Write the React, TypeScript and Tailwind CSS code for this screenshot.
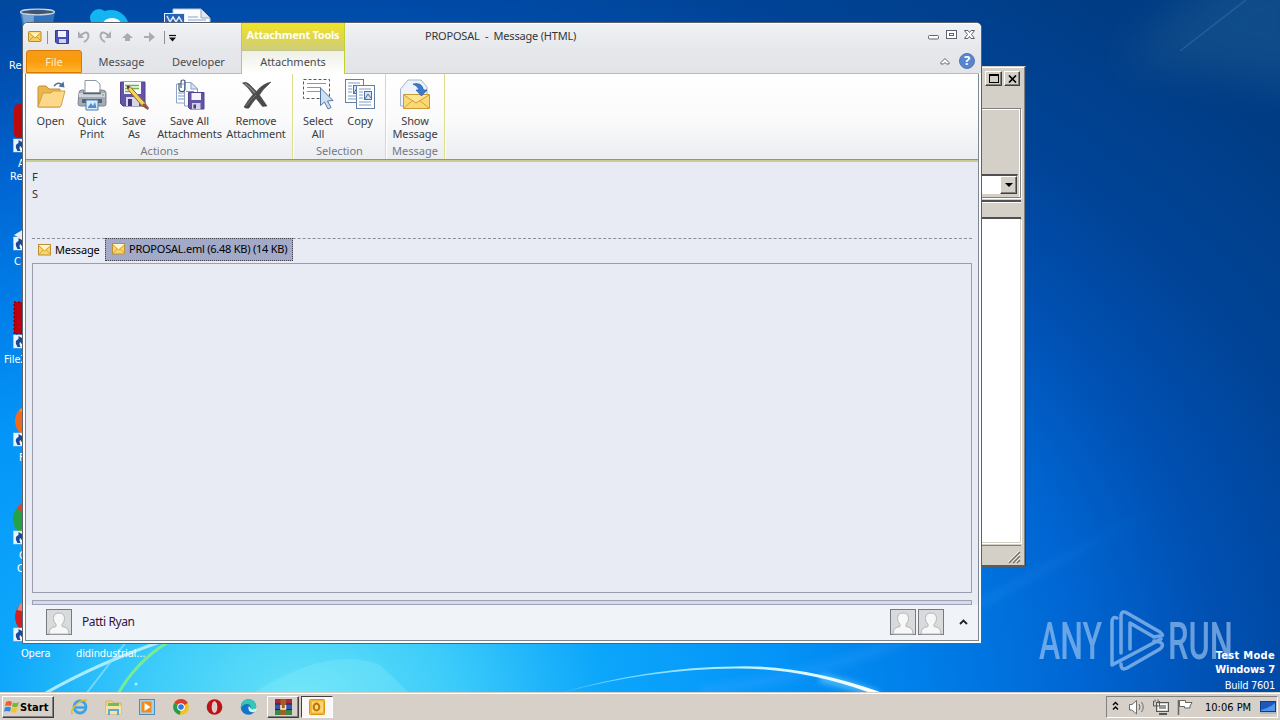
import type { ReactNode } from 'react'

interface RibbonButtonProps {
  icon: ReactNode
  lines: string[]
  className: string
}

const TABS = [
  { label: 'Message', className: 'w-[79px]' },
  { label: 'Developer', className: 'w-[75px]' },
]

function Wallpaper() {
  return (
    <svg className="absolute inset-0" width="1280" height="720" viewBox="0 0 1280 720">
      <defs>
        <radialGradient id="sky" gradientUnits="userSpaceOnUse" cx="0" cy="0" r="900" gradientTransform="translate(300 700) scale(1.4 1)">
          <stop offset="0" stopColor="#66e2f7" />
          <stop offset="0.12" stopColor="#3dccfa" />
          <stop offset="0.24" stopColor="#0ca6fb" />
          <stop offset="0.38" stopColor="#0494f8" />
          <stop offset="0.5" stopColor="#007de8" />
          <stop offset="0.62" stopColor="#0066d3" />
          <stop offset="0.73" stopColor="#0050b2" />
          <stop offset="0.84" stopColor="#004498" />
          <stop offset="1" stopColor="#003c84" />
        </radialGradient>
        <linearGradient id="arc" x1="0" x2="1" y1="0" y2="0">
          <stop offset="0" stopColor="#7fdcff" stopOpacity="0.7" />
          <stop offset="0.55" stopColor="#b9f0ff" />
          <stop offset="1" stopColor="#fff" />
        </linearGradient>
        <linearGradient id="beam" x1="0" x2="1" y1="0" y2="0">
          <stop offset="0" stopColor="#3aa4ff" stopOpacity="0.3" />
          <stop offset="1" stopColor="#3aa4ff" stopOpacity="0" />
        </linearGradient>
        <filter id="soft" x="-20%" y="-50%" width="140%" height="200%">
          <feGaussianBlur stdDeviation="3" />
        </filter>
        <filter id="haze" x="-50%" y="-50%" width="200%" height="200%">
          <feGaussianBlur stdDeviation="20" />
        </filter>
      </defs>
      <rect width="1280" height="720" fill="url(#sky)" />
      <path d="M1120 60 L1240 -40 L1320 -40 L1320 90Z" fill="#4d8aa0" opacity="0.2" filter="url(#haze)" />
      <path d="M1180 51 L1246 0" stroke="#6d98c8" strokeWidth="1.5" opacity="0.25" />
      <path d="M700 692 Q860 670 980 604 T1160 510" stroke="url(#beam)" strokeWidth="12" fill="none" filter="url(#soft)" />
      <path d="M255 692 Q330 645 380 665 L408 692Z" fill="#a0f4ff" opacity="0.22" />
      <path d="M820 678 Q850 684 878 696" stroke="#7fdcff" strokeWidth="8" fill="none" opacity="0.6" filter="url(#soft)" />
      <path d="M560 693 Q650 667 735 666.500 Q800 664 880 692 L868 692 Q800 668 735 668.500 Q650 669 560 693Z" fill="url(#arc)" />
      <path d="M44 694 Q96 664 160 642" stroke="#b8efff" strokeWidth="3" fill="none" opacity="0.9" />
      <path d="M86 694 L126 642" stroke="#8fe4ff" strokeWidth="2" opacity="0.7" />
      <path d="M118 694 Q136 662 168 642" stroke="#7df08a" strokeWidth="3" fill="none" opacity="0.9" />
      <circle cx="136" cy="684" r="1.500" fill="#a5f0ff" />
    </svg>
  )
}

function ShortcutArrow({ y }: { y: number }) {
  return (
    <g transform={`translate(13.5 ${y})`}>
      <rect width="13" height="13" fill="#eef4fb" stroke="#c5d4e4" strokeWidth="0.5" />
      <path d="M4 12 Q0 6 5 4 L5 1 L12 5 L8 9 L7 7 Q5 8 7 12Z" fill="#16499c" />
    </g>
  )
}

function DesktopIcons() {
  return (
    <>
      <svg className="absolute left-0 top-0" width="230" height="650" viewBox="0 0 230 650">
        <path d="M20 12 L55 12 L50 40 L25 40Z" fill="#3f7cbf" opacity="0.8" />
        <path d="M22 14 L34 16 L33 30 L25 30Z" fill="#a5c4e6" opacity="0.6" />
        <ellipse cx="37.500" cy="12" rx="17" ry="2.800" fill="#3e5672" stroke="#c9d6e2" strokeWidth="1.300" />
        <circle cx="99" cy="18" r="9" fill="#12b5f2" />
        <circle cx="111" cy="28" r="18" fill="#12b5f2" />
        <ellipse cx="112" cy="24" rx="9" ry="6" fill="#fff" />
        <path d="M173 9 L201 9 L210 18 L210 40 L173 40Z" fill="#fbfcfe" stroke="#b6c4d8" />
        <path d="M201 9 L201 18 L210 18" fill="#dfe6f0" stroke="#93a6c2" />
        <rect x="164.500" y="13.500" width="20" height="16" fill="#2a60b5" stroke="#e5eefa" />
        <path d="M167 16 L170 22 L173 17 L176 22 L179 17 L182 22" stroke="#d8e6fa" strokeWidth="1.500" fill="none" />
        <path d="M188 17h10M188 20h18" stroke="#8aa3cc" />
        <rect x="14" y="104" width="30" height="34" rx="5" fill="#bb0b0b" />
        <path d="M14 235 L24 229 L24 240Z" fill="#e8edf4" />
        <rect x="14" y="302" width="20" height="32" fill="#bc0010" stroke="#600" strokeDasharray="2 2" />
        <circle cx="32" cy="421" r="17" fill="#f26b1d" />
        <path d="M19 410 Q28 405 32 420" fill="#ff8e2e" />
        <circle cx="30" cy="519" r="17" fill="#27a243" />
        <path d="M30 519 L17 508 A17 17 0 0 1 45 508Z" fill="#e83e32" />
        <circle cx="32" cy="617" r="17" fill="#d3201f" />
        <path d="M17 610 Q20 602 26 600 L26 612Z" fill="#f07c74" />
        {[139, 237, 335, 433, 531, 628].map((y) => (
          <ShortcutArrow key={y} y={y} />
        ))}
      </svg>
      <div className="absolute inset-0 font-['DejaVu_Sans_Condensed','DejaVu_Sans',sans-serif] text-[11px] leading-[13px] text-white">
        <span className="absolute left-[9px] top-[59px]">Re</span>
        <span className="absolute left-[18px] top-[157px]">A</span>
        <span className="absolute left-[10px] top-[170px]">Re</span>
        <span className="absolute left-[14px] top-[255px]">C</span>
        <span className="absolute left-[4px] top-[353px]">FileZ</span>
        <span className="absolute left-[19px] top-[451px]">F</span>
        <span className="absolute left-[19px] top-[549px]">G</span>
        <span className="absolute left-[17px] top-[562px]">C</span>
        <span className="absolute left-[21px] top-[647px] tracking-[-0.2px]">Opera</span>
        <span className="absolute left-[76px] top-[647px] tracking-[-0.1px]">didindustrial...</span>
      </div>
    </>
  )
}

function Watermark() {
  return (
    <svg className="absolute left-[1030px] top-[590px]" width="210" height="90" viewBox="0 -10 210 90" overflow="visible">
      <g fill="#a9cdf5" opacity="0.62" fontWeight="500" fontFamily="Roboto, sans-serif" fontSize="52">
        <text x="9" y="59" textLength="63" lengthAdjust="spacingAndGlyphs">ANY</text>
        <text x="138" y="59" textLength="65" lengthAdjust="spacingAndGlyphs">RUN</text>
      </g>
      <g fill="none" stroke="#a9cdf5" strokeWidth="3.500" strokeLinejoin="round" strokeLinecap="round" opacity="0.65">
        <path d="M87 18 Q82 16 82 22 V65 L131 39" />
        <path d="M91 53 V15 Q92 10 97 13 L130 32 Q135 36 130 36 L124 37 L100 23 V49" />
        <path d="M91 64 Q91 71 97 68 L130 49 Q135 45 130 42 L124 41" />
      </g>
    </svg>
  )
}

function BackWindow() {
  return (
    <div className="absolute left-[940px] top-[66px] flex h-[501px] w-[86px] flex-col border-b-2 border-r border-t border-b-[#5d5c58] border-r-[#404040] border-t-[#d4d0c8] bg-[#d4d0c8] pr-[4px] shadow-[inset_-1px_0_0_#808080,inset_0_1px_0_#fff]">
      <div className="flex h-[41px] justify-end gap-0.5 pt-1 pr-px">
        <div className="flex h-[15px] w-[17px] items-center justify-center border border-b-[#404040] border-l-white border-r-[#404040] border-t-white shadow-[inset_-1px_-1px_0_#808080]">
          <div className="h-[9px] w-[10px] border border-t-2 border-black" />
        </div>
        <div className="flex h-[15px] w-[16px] items-center justify-center border border-b-[#404040] border-l-white border-r-[#404040] border-t-white shadow-[inset_-1px_-1px_0_#808080]">
          <svg width="9" height="8" viewBox="0 0 9 8">
            <path d="M1 0.500 L8 7.500 M8 0.500 L1 7.500" stroke="#000" strokeWidth="1.700" />
          </svg>
        </div>
      </div>
      <div className="flex h-[90px] flex-col justify-end border-b border-r border-t border-[#808080] pb-0.5 pr-0.5 shadow-[1px_1px_0_#fff,inset_-1px_1px_0_#fff]">
        <div className="flex h-[21px] justify-end border border-t-2 border-[#d4d0c8] border-t-[#505050] bg-white">
          <div className="flex w-[17px] items-center justify-center border border-b-[#404040] border-l-white border-r-[#404040] border-t-white bg-[#d4d0c8] shadow-[inset_-1px_-1px_0_#808080]">
            <svg width="8" height="4" viewBox="0 0 8 4">
              <path d="M0 0H8L4 4Z" />
            </svg>
          </div>
        </div>
      </div>
      <div className="mt-[2px] h-[19px] border-b-2 border-t-2 border-[#505050] shadow-[inset_0_1px_0_#fff]" />
      <div className="h-[324px] border-b border-r border-[#d4d0c8] bg-white shadow-[1px_1px_0_#fff]" />
      <div className="mt-[2px] flex flex-1 items-end justify-end border-t border-[#808080]">
        <svg width="13" height="17" viewBox="0 0 13 17">
          <path d="M1 15 L12 4 M5 15 L12 8 M9 15 L12 12" stroke="#77746e" strokeWidth="1.500" />
          <path d="M0 14 L11 3 M4 14 L12 6 M8 14 L12 10" stroke="#fff" strokeWidth="0.700" />
        </svg>
      </div>
    </div>
  )
}

function Envelope() {
  return (
    <svg width="14" height="12" viewBox="0 0 14 12">
      <rect x="0.500" y="0.500" width="12" height="10.500" fill="#fbd667" stroke="#b98f3c" />
      <path d="M1 1 H12.500 L6.500 6.500Z" fill="#fff6cb" />
      <path d="M1 10.500 L5 6 M12.500 10.500 L8.500 6 M1 2 L6.500 7 L12.500 2" fill="none" stroke="#d9a23a" />
    </svg>
  )
}

function OpenIcon() {
  return (
    <svg width="32" height="32" viewBox="0 0 32 32">
      <path d="M3 28 V9 Q3 7 5 7 H11 L14 10 H25 V28Z" fill="#e9b54d" stroke="#c58f34" />
      <path d="M3 28 L8 14 H16 L18 12 H30 L26 27 Q25.500 28 24 28Z" fill="#fbd88a" stroke="#d3a049" />
      <path d="M19 7 Q23 2 27 6" fill="none" stroke="#4e7297" strokeWidth="1.600" />
      <path d="M23.500 7.500 L29.500 8.500 L28.500 2.500Z" fill="#4e7297" />
    </svg>
  )
}

function PrinterIcon() {
  return (
    <svg width="32" height="32" viewBox="0 0 32 32">
      <path d="M9 14 V1.500 H20 L24 5 V14Z" fill="#fff" stroke="#8d98a6" />
      <path d="M3 14 Q3 11 6 11 H8 V14 H24 V11 H26 Q30 11 30 14 V25 Q30 27 28 27 H5 Q2 27 2 25Z" fill="#a3abb6" stroke="#7c8592" />
      <path d="M3 14 H29 V18 H3Z" fill="#d0d5dc" />
      <path d="M7 14.500h18" stroke="#59626f" strokeWidth="1.500" />
      <circle cx="27" cy="16" r="1" fill="#83b95c" />
      <path d="M6 20 H26 V24 H6Z" fill="#596473" />
      <path d="M10 21 H22 V31 H10Z" fill="#dcecfb" stroke="#4e7db2" />
      <path d="M12 28 L15 24 L17 27 L19 23 L20.500 29 H12Z" fill="#4d8fd0" />
    </svg>
  )
}

function SaveAsIcon() {
  return (
    <svg width="32" height="32" viewBox="0 0 32 32">
      <path d="M2.500 3 H27 V27 H5 L2.500 24.500Z" fill="#6453a6" stroke="#51428f" />
      <rect x="6" y="3" width="17" height="12" fill="#f7f9fc" />
      <path d="M7 6.500h14M7 9.500h14M7 12.500h10" stroke="#72b053" strokeWidth="1.300" />
      <rect x="8" y="18" width="13" height="9" fill="#d6d6e6" />
      <rect x="10" y="20" width="4" height="7" fill="#45377d" />
      <path d="M9 7 L12 7.500 L28 25 L25 28 L10 10.500Z" fill="#f8d456" stroke="#926a28" />
      <path d="M9 7 L12 7.500 L10 10.500Z" fill="#35312c" />
      <path d="M25.500 24.500 L28 25 L31 29 L30 31 L26 28.500 L24 26Z" fill="#8f5748" />
    </svg>
  )
}

function SaveAllIcon() {
  return (
    <svg width="32" height="32" viewBox="0 0 32 32">
      <path d="M2.500 5 H11 L15 9 V24 H2.500Z" fill="#fff" stroke="#8da3c3" />
      <path d="M10.500 3.500 H17 L23.500 10 V27 H10.500Z" fill="#f6f9fd" stroke="#8da3c3" />
      <path d="M17 3.500 V10 H23.500Z" fill="#dbe6f4" stroke="#8da3c3" />
      <path d="M4 14h6M4 17h6M4 20h6M12 12.500h8" stroke="#7195c6" />
      <path d="M5 4 V10 Q5 12.500 8 12.500 Q11 12.500 11 10 V3 Q11 1 9 1 Q7 1 7 3 V9" fill="none" stroke="#445a79" strokeWidth="1.200" />
      <path d="M14.500 13.500 H30 V30 H16 L14.500 28.500Z" fill="#6553a7" stroke="#51428f" />
      <rect x="17.500" y="14" width="9.500" height="7" fill="#f3f5fb" />
      <rect x="18" y="24" width="8.500" height="6" fill="#d4d3e5" />
      <rect x="19.500" y="25.500" width="2.500" height="4" fill="#45377d" />
    </svg>
  )
}

function RemoveIcon() {
  return (
    <svg width="32" height="32" viewBox="0 0 32 32">
      <path d="M2.500 4 Q6 2 9 5 Q13 9 16.500 12.500 Q22 5 31 3 L28 6 Q23 10 19.500 16 Q23 21 27 27 L22.500 27.500 Q19 23 16 19.500 Q12 24 9 29 Q6 30 4 28 Q8 21 13 15.500 Q8 8 2.500 4Z" fill="#4b4b4d" stroke="#3a3a3c" strokeWidth="0.500" />
      <path d="M5 4.500 Q10 8 15 14" fill="none" stroke="#8d8d8f" strokeWidth="1.500" />
      <path d="M6 27 Q11 20 16 16" fill="none" stroke="#77777a" />
    </svg>
  )
}

function SelectAllIcon() {
  return (
    <svg width="32" height="32" viewBox="0 0 32 32">
      <rect x="1.500" y="0.500" width="26" height="19" fill="#fff" stroke="#55585e" strokeWidth="1" strokeDasharray="3 2" />
      <path d="M5 4.500h19M5 8.500h14M5 12.500h14" stroke="#8b97a8" />
      <path d="M18.500 9 V26.500 L22.500 23 L26 30 L29 28.500 L25.500 22 L31 21.500Z" fill="#cfe0f3" stroke="#53769f" />
    </svg>
  )
}

function PageGlyph({ x, y }: { x: number; y: number }) {
  return (
    <g transform={`translate(${x} ${y})`}>
      <rect x="0.500" y="0.500" width="18" height="23" fill="#fff" stroke="#627fa7" />
      <path d="M3 4h12M3 7h4M3 10h4M3 13h4M3 17h12M3 20h12" stroke="#7b9dc9" />
      <rect x="8.500" y="6.500" width="7" height="8" fill="#d2e3f6" stroke="#4f719f" />
      <path d="M9 14 L12 9 L15 13" fill="none" stroke="#466f9f" />
    </g>
  )
}

function CopyIcon() {
  return (
    <svg width="32" height="32" viewBox="0 0 32 32">
      <PageGlyph x={1} y={0} />
      <PageGlyph x={12} y={6} />
    </svg>
  )
}

function ShowMessageIcon() {
  return (
    <svg width="32" height="32" viewBox="0 0 32 32">
      <path d="M1.500 27 V10 L9 1 H22 L28 8 V18 H5 V27Z" fill="#edf3fa" stroke="#a6b5c8" />
      <path d="M4.500 15.500 H30.500 V29.500 H4.500Z" fill="#fbd873" stroke="#c99a33" />
      <path d="M5 16 L17 24 L30 16" fill="#fce492" stroke="#ce9f38" />
      <path d="M5 29 L13.500 21.500 M30 29 L20.500 21.500" stroke="#d4a33b" />
      <path d="M14 5 Q23 3 24.500 11 H28 L22.500 17 L17 11 H20 Q19 7 14 5Z" fill="#3e78cb" stroke="#275aa5" strokeWidth="0.700" />
    </svg>
  )
}

function RibbonButton({ icon, lines, className }: RibbonButtonProps) {
  return (
    <div className={`flex flex-col items-center ${className}`}>
      {icon}
      <div className="mt-[3px] text-center text-[11px] leading-[13px] tracking-[-0.1px] text-[#3a3d44]">
        {lines.map((line) => (
          <div key={line} className="whitespace-nowrap">{line}</div>
        ))}
      </div>
    </div>
  )
}

function RibbonGroup({ name, className, children }: { name: string; className: string; children: ReactNode }) {
  return (
    <div className={`flex flex-col border-r border-[#dcdf8c] pt-[5px] shadow-[1px_0_0_#fff] ${className}`}>
      <div className="flex h-[65px]">{children}</div>
      <div className="pr-[3px] text-center text-[11px] leading-[13px] text-[#737986]">{name}</div>
    </div>
  )
}

function QuickAccess() {
  return (
    <svg width="160" height="20" viewBox="26 27 160 20">
      <g transform="translate(28 31)">
        <rect x="0.500" y="0.500" width="12.500" height="10" rx="0.800" fill="#f8cf5a" stroke="#b58a35" />
        <path d="M1 1.500 L7 7 L13 1.500 M1 10 L5 6 M13 10 L9 6" fill="#fff2b8" stroke="#d4982c" />
      </g>
      <path d="M47.500 31 V44" stroke="#8b9098" />
      <path d="M55.500 30.500 H68.500 V43.500 H57 L55.500 42Z" fill="#4a52b8" stroke="#35398f" />
      <rect x="58" y="31" width="8" height="6" fill="#f1f4fd" />
      <rect x="59" y="39" width="7" height="4" fill="#cfd4ee" />
      <g fill="none" stroke="#a9acb1" strokeWidth="2">
        <path d="M80 36 Q88 29 88.500 36 Q88 40 84 42" />
        <path d="M109 36 Q101 29 100.500 36 Q101 40 105 42" />
      </g>
      <path d="M78 31 V38 H84Z M111 31 V38 H105Z" fill="#a9acb1" />
      <path d="M122 38 L127.500 33 L133 38 H130 V41 H125 V38Z M144 36 H149 V32 L155 37 L149 42 V38 H144Z" fill="#a9acb1" />
      <path d="M164.500 31 V44" stroke="#8b9098" />
      <path d="M169 35.500 H176" stroke="#111" strokeWidth="1.200" />
      <path d="M169 37.500 H176 L172.500 41.500Z" fill="#111" />
    </svg>
  )
}

function WindowHeader() {
  return (
    <div className="flex h-[50px] shrink-0 rounded-t-[5px] bg-linear-to-b from-[#f1f2f4] via-[#e6e8eb] to-[#e2e4e8] shadow-[inset_0_1px_0_#fff]">
      <div className="flex w-[218px] flex-col pl-[3px]">
        <div className="flex h-[27px] items-center">
          <QuickAccess />
        </div>
        <div className="flex h-[23px] items-center text-[11px] text-[#484b52]">
          <div className="flex h-full w-[56px] items-center justify-center rounded-t-[3px] border border-[#d67a06] bg-linear-to-b from-[#f59a1c] via-[#fb9c04] to-[#ffb52e] pt-px text-[#ffeccb]">File</div>
          {TABS.map((tab) => (
            <div key={tab.label} className={`pt-px text-center ${tab.className}`}>{tab.label}</div>
          ))}
        </div>
      </div>
      <div className="relative -mb-px flex w-[104px] flex-col border-x border-[#c3d02c]">
        <div className="flex h-[27px] items-center justify-center bg-linear-to-b from-[#f0e51f] via-[#e0d64a] to-[#cfce7c] pb-0.5 text-[11px] font-bold tracking-[-0.25px] whitespace-nowrap text-[#fffff0]">
          Attachment Tools
        </div>
        <div className="flex h-6 items-center justify-center border-t border-[#c3c887] bg-linear-to-b from-[#eeefe6] to-white text-[11px] text-[#484b52]">
          Attachments
        </div>
      </div>
      <div className="flex flex-1 flex-col">
        <div className="flex h-[27px] items-center text-[11px] text-[#33363c]">
          <div className="ml-[80px] w-[152px] tracking-[-0.2px] whitespace-pre">PROPOSAL  -  Message (HTML)</div>
          <svg className="mr-[5px] mb-[3px] ml-auto" width="48" height="14" viewBox="0 0 48 14" fill="#fff" stroke="#5d6370">
            <rect x="0.500" y="7.500" width="10" height="3.500" rx="1" />
            <rect x="18.500" y="2.500" width="10" height="8" />
            <rect x="21.500" y="5.500" width="4" height="2" />
            <path d="M36.500 2.500 H40 L41.500 4.500 L43 2.500 H46.500 L43.500 6.500 L46.500 10.500 H43 L41.500 8.500 L40 10.500 H36.500 L39.500 6.500Z" />
          </svg>
        </div>
        <div className="flex h-[23px] items-center justify-end gap-[9px] pr-[6px] pb-[2px]">
          <svg width="10" height="8" viewBox="0 0 10 8">
            <path d="M1 5.500 L5 1.500 L9 5.500 V7 H6.500 L5 5.500 L3.500 7 H1Z" fill="#fff" stroke="#5d6370" />
          </svg>
          <div className="flex size-[16px] items-center justify-center rounded-full border border-[#5577b8] bg-[#5684cd] text-[13px] font-bold text-white">?</div>
        </div>
      </div>
    </div>
  )
}

function Avatar() {
  return (
    <svg width="26" height="26" viewBox="0 0 26 26">
      <rect x="0.500" y="0.500" width="25" height="25" fill="#d9dadc" stroke="#777a80" />
      <path d="M3 25 Q3 18 10 17.500 V15.500 Q7.500 13 7.500 9.500 Q7.500 4 13 4 Q18.500 4 18.500 9.500 Q18.500 13 16 15.500 V17.500 Q23 18 23 25Z" fill="#f7f7f7" stroke="#b5b6b9" />
    </svg>
  )
}

function MessageWindow() {
  return (
    <div className="absolute left-[22px] top-[22px] flex h-[622px] w-[960px] flex-col rounded-t-[6px] border border-[#59616d] bg-[#fcfdfd]">
      <WindowHeader />
      <div className="mx-[2px] h-px shrink-0 bg-[#c3d02c]" />
      <div className="mx-[2px] mb-[2px] flex flex-1 flex-col border-x border-b border-[#7e8691] bg-[#e8ebf3]">
        <div className="flex h-[86px] border-b border-[#8e9199] bg-linear-to-b from-white via-[#fbfbfc] to-[#ebedf1]">
          <RibbonGroup name="Actions" className="w-[267px] pl-[4px]">
            <RibbonButton icon={<OpenIcon />} lines={['Open']} className="w-[41px]" />
            <RibbonButton icon={<PrinterIcon />} lines={['Quick', 'Print']} className="w-[42px]" />
            <RibbonButton icon={<SaveAsIcon />} lines={['Save', 'As']} className="w-[42px]" />
            <RibbonButton icon={<SaveAllIcon />} lines={['Save All', 'Attachments']} className="w-[69px]" />
            <RibbonButton icon={<RemoveIcon />} lines={['Remove', 'Attachment']} className="w-[64px]" />
          </RibbonGroup>
          <RibbonGroup name="Selection" className="w-[93px] pl-[4px]">
            <RibbonButton icon={<SelectAllIcon />} lines={['Select', 'All']} className="w-[42px]" />
            <RibbonButton icon={<CopyIcon />} lines={['Copy']} className="w-[42px]" />
          </RibbonGroup>
          <RibbonGroup name="Message" className="w-[59px] pl-[3px]">
            <RibbonButton icon={<ShowMessageIcon />} lines={['Show', 'Message']} className="w-[52px]" />
          </RibbonGroup>
        </div>
        <div className="h-[2px] bg-[#c9cc94]" />
        <div className="h-[76px] pl-[6px] pt-[6px] text-[11px] leading-[17px] text-[#2e3036]">
          <div>F</div>
          <div>S</div>
        </div>
        <div className="mx-[6px] flex h-[25px] items-start border-t border-dashed border-[#8b8f9b] text-[11px] text-black">
          <div className="flex h-[22px] w-[73px] items-center gap-[3px] pl-[6px] whitespace-nowrap">
            <Envelope />
            <span className="tracking-[-0.2px]">Message</span>
          </div>
          <div className="-mt-px flex h-[23px] w-[188px] items-center gap-[3px] border border-dotted border-[#3c3f4c] bg-[#a3aac8] pb-px pl-[6px] whitespace-nowrap">
            <Envelope />
            <span className="tracking-[-0.24px]">PROPOSAL.eml (6.48 KB) (14 KB)</span>
          </div>
        </div>
        <div className="mx-[6px] h-[330px] border border-[#9a9fae]" />
        <div className="mx-[6px] mt-[7px] h-[5px] border border-[#9ca2b5] bg-[#d5d9e8]" />
        <div className="flex flex-1 items-center bg-[#f0f3f7] pr-[10px] pb-[2px] pl-[20px]">
          <Avatar />
          <span className="ml-[10px] flex-1 text-[12px] tracking-[-0.4px] text-[#34123f]">Patti Ryan</span>
          <div className="flex gap-[2px]">
            <Avatar />
            <Avatar />
          </div>
          <svg className="ml-[15px]" width="9" height="6" viewBox="0 0 9 6">
            <path d="M1 5 L4.500 1.500 L8 5" fill="none" stroke="#222" strokeWidth="1.800" />
          </svg>
        </div>
      </div>
    </div>
  )
}

function TaskbarIcons() {
  return (
    <svg className="ml-[17px]" width="190" height="22" viewBox="71 696 190 22">
      <g fill="none">
        <ellipse cx="80" cy="707" rx="6" ry="6" stroke="#3ba4e4" strokeWidth="2.800" />
        <path d="M75 707.500H86" stroke="#3ba4e4" strokeWidth="2.500" />
        <path d="M73 713 Q69 715 74 707 Q81 699 87 700" stroke="#e9b931" strokeWidth="1.500" />
      </g>
      <path d="M106 701 H112 L114 703 H121 V714 H106Z" fill="#f2d57f" stroke="#d2a94b" strokeWidth="0.700" />
      <path d="M108 703 H119 V707 H108Z" fill="#76b85f" />
      <path d="M106 706 H121 V714 H106Z" fill="#f8e4a1" />
      <path d="M109 715 V710 H118 V715" fill="none" stroke="#5aa9da" strokeWidth="2" />
      <rect x="139.500" y="699.500" width="15" height="15" fill="#a8d1ed" stroke="#4c8dbc" />
      <rect x="141.500" y="701.500" width="10" height="11" fill="#f38a16" />
      <path d="M144.500 703 V711 L150.500 707Z" fill="#fff" />
      <circle cx="181" cy="707" r="7.800" fill="#f3c316" />
      <path d="M181 707 L174.200 703.100 A7.800 7.800 0 0 1 187.800 703.100Z" fill="#dd3b2d" />
      <path d="M181 707 L174.200 703.100 A7.800 7.800 0 0 0 180 714.700Z" fill="#279c4b" />
      <circle cx="181" cy="707" r="3.800" fill="#fff" />
      <circle cx="181" cy="707" r="2.800" fill="#3478e3" />
      <circle cx="214.500" cy="707" r="7.800" fill="#bd1217" />
      <ellipse cx="214.500" cy="707" rx="2.300" ry="5.500" fill="#d6d0c8" stroke="#f6dcd6" />
      <circle cx="248.500" cy="707" r="7.800" fill="#1474c9" />
      <path d="M241 705 Q243 698.500 250 699.200 Q257 701 256 708 Q254 711 250 709 Q252 704 247 704 Q243 704 241 708Z" fill="#37c5b5" />
      <path d="M249 706 Q247 710 251 712 Q254 713 256 711 L257 707 Q255 710 251 709Z" fill="#d6f2ef" />
    </svg>
  )
}

function Taskbar() {
  return (
    <div className="relative mt-auto flex h-[28px] items-center border-t border-[#d6d0c8] bg-[#d6d0c8] pt-[3px] pr-[2px] pb-[2px] pl-[2px] font-['DejaVu_Sans_Condensed','DejaVu_Sans',sans-serif] text-[11px] text-black shadow-[inset_0_1px_0_#fff]">
      <div className="flex h-[22px] w-[52px] items-center border border-b-[#404040] border-l-white border-r-[#404040] border-t-white shadow-[inset_-1px_-1px_0_#808080]">
        <svg className="ml-px shrink-0" width="16" height="16" viewBox="0 0 16 16">
          <path d="M2 3 Q5 1 8 3 L7 7 Q4 6 1 7Z" fill="#ee6030" />
          <path d="M9 3.500 Q12 5 15 3 L13.500 7.500 Q11 9 8 7.500Z" fill="#75b73b" />
          <path d="M1 8.500 Q4 7 7 8.500 L6 12.500 Q3 11.500 0 12.500Z" fill="#3288db" />
          <path d="M8 8.500 Q11 10 13.500 8.500 L12 13 Q9.500 14.500 7 13Z" fill="#f5c22c" />
        </svg>
        <span className="pt-0.5 font-bold tracking-[0.1px]">Start</span>
      </div>
      <TaskbarIcons />
      <div className="ml-[6px] flex h-[22px] w-[32px] items-center justify-center border border-b-[#404040] border-l-white border-r-[#404040] border-t-white shadow-[inset_-1px_-1px_0_#808080]">
        <svg width="17" height="16" viewBox="0 0 17 16">
          <rect width="17" height="5" fill="#a7283c" />
          <rect y="5" width="17" height="5" fill="#3854b0" />
          <rect y="10" width="17" height="6" fill="#39884a" />
          <path d="M0 5h17M0 10.500h17" stroke="#2a2236" />
          <rect x="5.500" width="5.500" height="16" fill="#a95c20" />
          <path d="M6 6 V10 H10.500 V6" fill="none" stroke="#f6ecd0" strokeWidth="1.500" />
        </svg>
      </div>
      <div className="ml-[2px] flex h-[22px] w-[32px] items-center justify-center border border-b-white border-l-[#404040] border-r-white border-t-[#404040] bg-[#f9f8f6]">
        <svg width="16" height="16" viewBox="0 0 16 16">
          <rect x="0.500" y="0.500" width="15" height="15" rx="1" fill="#f5b52e" stroke="#d99414" />
          <rect x="3" y="2.500" width="11" height="11" fill="#fbd676" />
          <ellipse cx="7.500" cy="8" rx="2.800" ry="3.500" fill="none" stroke="#b87608" strokeWidth="2" />
        </svg>
      </div>
      <div className="ml-auto flex h-[22px] w-[172px] items-center border border-b-white border-l-[#808080] border-r-white border-t-[#808080] pl-[5px]">
        <svg width="86" height="18" viewBox="1112 698 86 18">
          <path d="M1113 705 L1115.500 702.500 L1118 705 M1113 709.500 L1115.500 707 L1118 709.500" fill="none" stroke="#000" strokeWidth="1.400" />
          <path d="M1129.500 704.500 H1132 L1136.500 700.500 V714 L1132 710 H1129.500Z" fill="#fff" stroke="#6d6d6d" />
          <path d="M1139 704 Q1141 707 1139 710 M1141.500 702 Q1145 707 1141.500 712" fill="none" stroke="#6d6d6d" />
          <rect x="1156.500" y="702.500" width="12" height="9" fill="#d4d4d4" stroke="#555" />
          <rect x="1158.500" y="704.500" width="8" height="5" fill="#999" stroke="#fff" />
          <path d="M1159 714 H1167" stroke="#555" strokeWidth="2" />
          <path d="M1153.500 701 V706 H1159.500 V701 M1156.500 706 V712 M1155 699.500 V702 M1158 699.500 V702" fill="none" stroke="#555" />
          <path d="M1178.500 700 V715" stroke="#666" strokeWidth="1.500" />
          <path d="M1179.500 700.500 H1185.500 V702.500 H1192 L1190 706 V708 H1184.500 V706.500 H1179.500Z" fill="#fff" stroke="#666" />
        </svg>
        <span className="ml-[7px] w-[46px] pt-0.5 whitespace-nowrap">10:06 PM</span>
        <svg className="ml-[9px]" width="16" height="13" viewBox="0 0 16 13">
          <rect x="0.500" y="0.500" width="15" height="10" fill="#1d57bd" stroke="#143c80" />
          <path d="M1 9 Q8 8 15 2 V10 H1Z" fill="#4f97e6" />
          <path d="M0 12 H16" stroke="#7fa0c8" />
        </svg>
      </div>
    </div>
  )
}

export default function App() {
  return (
    <div className="relative flex h-[720px] w-[1280px] flex-col overflow-hidden bg-[#004aa6] font-['Noto_Sans','Open_Sans',sans-serif]">
      <Wallpaper />
      <DesktopIcons />
      <BackWindow />
      <MessageWindow />
      <Watermark />
      <div className="absolute top-[649px] right-[5px] text-right font-['DejaVu_Sans_Condensed','DejaVu_Sans',sans-serif] text-[11px] leading-[14px] text-white">
        <div className="font-bold tracking-[0.3px]">Test Mode</div>
        <div className="font-bold tracking-[-0.1px]">Windows 7</div>
        <div className="mt-[2px] tracking-[-0.3px]">Build 7601</div>
      </div>
      <Taskbar />
    </div>
  )
}
